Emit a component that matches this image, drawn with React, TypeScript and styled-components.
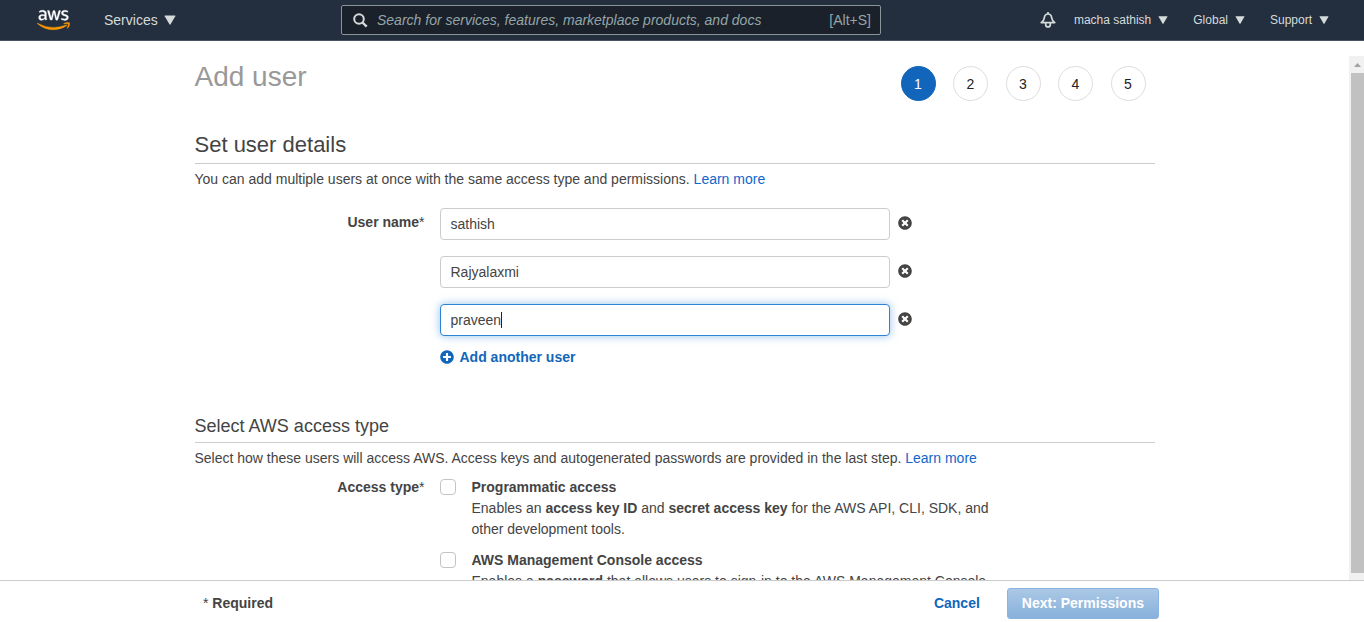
import React, { useState } from "react";
import styled, { createGlobalStyle } from "styled-components";
import { FaAws, FaPlusCircle, FaTimesCircle } from "react-icons/fa";

const GlobalStyle = createGlobalStyle`
  *, *::before, *::after { box-sizing: border-box; }
  body {
    margin: 0;
    background: #fff;
    color: #444;
    font: 14px/21px "Liberation Sans", Arial, sans-serif;
  }
  h1, h2, h3, p { margin: 0; font-weight: 400; }
  button, input { font: inherit; color: inherit; }
  button { padding: 0; border: 0; background: none; cursor: pointer; }
`;

const Page = styled.div`
  display: flex;
  flex-direction: column;
  height: 100vh;
`;

const TopBar = styled.header`
  display: grid;
  grid-template-columns: 341px minmax(0, 540px) 1fr;
  align-items: center;
  flex: none;
  height: 41px;
  border-bottom: 1px solid #4a5361;
  background: #232f3e;
  color: #d5dbdb;
`;

const NavStart = styled.div`
  display: flex;
  align-items: center;
  gap: 34px;
  padding-left: 37px;
`;

const NavEnd = styled.nav`
  display: flex;
  align-items: center;
  justify-content: flex-end;
  padding-right: 35px;
`;

const Logo = styled.a`
  display: flex;
  color: #fff;
  svg { width: 33px; height: 26px; }
  svg:last-child path { fill: url(#awsFill); }
`;

const GradientDefs = styled.svg`
  && { width: 0; height: 0; }
`;

const NavButton = styled.button<{ $small?: boolean }>`
  display: flex;
  align-items: center;
  gap: ${(p) => (p.$small ? 7 : 6)}px;
  font-size: ${(p) => (p.$small ? 12 : 14)}px;
  white-space: nowrap;
  & + & { margin-left: 25px; }
`;

const BellButton = styled.button`
  display: flex;
  margin-right: 18px;
`;

const SearchBox = styled.label`
  display: flex;
  align-items: center;
  height: 30px;
  padding: 0 9px 0 11px;
  border: 1px solid #879596;
  border-radius: 2px;
  background: #1a212b;
  color: #95a5a6;
`;

const SearchInput = styled.input`
  flex: 1;
  min-width: 0;
  padding: 0 0 0 9px;
  border: 0;
  outline: 0;
  background: none;
  &::placeholder { color: #95a5a6; font-style: italic; opacity: 1; }
`;

const Body = styled.div`
  display: flex;
  flex: 1;
  min-height: 0;
  margin-top: 15px;
`;

const ScrollArea = styled.main`
  flex: 1;
  min-width: 0;
  overflow: auto;
  scrollbar-width: none;
`;

const Content = styled.div`
  max-width: 960px;
  margin: 0 auto;
`;

const ScrollTrack = styled.div`
  display: flex;
  flex-direction: column;
  align-items: flex-end;
  flex: none;
  width: 15px;
  padding-bottom: 7px;
  background: #f1f1f1;
`;

const ScrollArrow = styled.svg`
  flex: none;
  width: 15px;
  height: 17px;
`;

const ScrollThumb = styled.div`
  flex: 1;
  width: 13px;
  background: #c1c1c1;
`;

const TitleRow = styled.div`
  display: flex;
  justify-content: space-between;
  align-items: flex-start;
  margin-bottom: 29px;
`;

const Title = styled.h1`
  font-size: 28px;
  line-height: 42px;
  color: #999;
`;

const Steps = styled.ol`
  display: flex;
  justify-content: space-between;
  width: 245px;
  margin: 0 9px 0 0;
  padding: 10px 0 0;
  list-style: none;
`;

const Step = styled.li<{ $active?: boolean }>`
  width: 35px;
  height: 35px;
  border: 1px solid ${(p) => (p.$active ? "#1166bb" : "#ddd")};
  border-radius: 50%;
  background: ${(p) => (p.$active ? "#1166bb" : "#fff")};
  color: ${(p) => (p.$active ? "#fff" : "#222")};
  line-height: 35px;
  text-align: center;
`;

const SectionTitle = styled.h2`
  padding-bottom: 4px;
  border-bottom: 1px solid #ccc;
  margin-bottom: 5px;
  font-size: 22px;
  line-height: 29px;
`;

const SubsectionTitle = styled(SectionTitle).attrs({ as: "h3" })`
  margin-top: 46px;
  font-size: 18px;
  line-height: 24px;
`;

const TextLink = styled.a`
  color: #1166cc;
  text-decoration: none;
`;

const FieldRow = styled.div<{ $top: number }>`
  display: grid;
  grid-template-columns: 230px 1fr;
  gap: 15px;
  margin-top: ${(p) => p.$top}px;
`;

const FieldLabel = styled.div<{ $inset?: boolean }>`
  padding-top: ${(p) => (p.$inset ? 4 : 0)}px;
  font-weight: 700;
  text-align: right;
  span { font-weight: 400; }
`;

const UserList = styled.div`
  display: flex;
  flex-direction: column;
  gap: 16px;
`;

const UserRow = styled.div`
  display: flex;
  align-items: center;
  gap: 8px;
`;

const UserBox = styled.label`
  display: flex;
  align-items: center;
  width: 450px;
  height: 32px;
  padding: 0 10px;
  border: 1px solid #ccc;
  border-radius: 4px;
  background: #fff;
  cursor: text;
  &:focus-within {
    border-color: #2b84d8;
    box-shadow: 0 0 8px rgba(43, 132, 216, 0.5);
  }
`;

const UserInput = styled.input`
  field-sizing: content;
  max-width: 100%;
  padding: 0;
  border: 0;
  outline: 0;
  background: none;
  caret-color: transparent;
`;

const TextCursor = styled.span`
  display: none;
  width: 1px;
  height: 16px;
  background: #222;
  input:focus + & { display: block; }
`;

const RemoveButton = styled.button`
  display: flex;
  padding-bottom: 2px;
`;

const AddButton = styled.button`
  display: flex;
  align-items: center;
  gap: 6px;
  margin-top: 11px;
  color: #1166bb;
  font-weight: 700;
  svg { margin-bottom: 2px; }
`;

const Options = styled.div`
  display: flex;
  flex-direction: column;
  gap: 10px;
`;

const Option = styled.label`
  display: flex;
  align-items: flex-start;
  gap: 16px;
  max-width: 560px;
`;

const CheckBox = styled.input`
  appearance: none;
  flex: none;
  width: 16px;
  height: 16px;
  margin: 2px 0 0;
  border: 1px solid #c4c4c4;
  border-radius: 4px;
  background: #fff;
  &:checked { border-color: #1166bb; background: #1166bb; }
`;

const Footer = styled.footer`
  flex: none;
  padding: 7px 0 3px;
  border-top: 1px solid #ccc;
  background: #fff;
`;

const FooterInner = styled.div`
  display: flex;
  align-items: center;
  max-width: 960px;
  margin: 0 auto;
  padding: 0 3px 0 1px;
`;

const Required = styled.p`
  flex: 1;
  && { font-weight: 700; }
  span { font-weight: 400; }
`;

const CancelButton = styled.button`
  margin-right: 27px;
  color: #1166bb;
  font-weight: 700;
`;

const NextButton = styled.button`
  height: 31px;
  padding: 0 14px;
  border: 1px solid #8ab3df;
  border-radius: 3px;
  background: linear-gradient(#abc8e6, #88b1dc);
  color: #fff;
  font-weight: 700;
`;

const Caret = ({ size }: { size: number }) => (
  <svg width={size} height={size} viewBox="0 0 10 10" aria-hidden="true">
    <path d="M.9 1.2h8.2q.6 0 .3.6L5.5 8.6q-.5.7-1 0L.6 1.8Q.3 1.2 .9 1.2Z" fill="#d5dbdb" />
  </svg>
);

const SearchIcon = () => (
  <svg width="15" height="15" viewBox="0 0 15 15" fill="none" stroke="#d5dbdb" strokeWidth="2" aria-hidden="true">
    <circle cx="6" cy="6" r="4.8" />
    <path d="M9.5 9.5 13.7 13.7" strokeWidth="2.4" />
  </svg>
);

const BellIcon = () => (
  <svg width="16" height="16" viewBox="0 0 16 16" fill="none" stroke="#d5dbdb" strokeWidth="1.7" strokeLinejoin="round" aria-hidden="true">
    <path d="M8 0v2M1.2 10.6C3.4 9.2 4 8 4.3 5.8 4.6 3.4 6 2 8 2s3.4 1.4 3.7 3.8c.3 2.2.9 3.4 3.1 4.8Z" />
    <path d="M5.7 11v1.4c0 1.5 1 2.5 2.3 2.5s2.3-1 2.3-2.5V11" />
  </svg>
);

export default function App() {
  const [users, setUsers] = useState(["sathish", "Rajyalaxmi", "praveen"]);

  const rename = (index: number, value: string) =>
    setUsers(users.map((u, i) => (i === index ? value : u)));

  return (
    <>
      <GlobalStyle />
      <Page>
        <TopBar>
          <NavStart>
            <Logo href="#" aria-label="AWS home">
              <GradientDefs aria-hidden="true">
                <linearGradient id="awsFill" x1="0" y1="0" x2="0" y2="1">
                  <stop offset="0.61" stopColor="#fff" />
                  <stop offset="0.61" stopColor="#f90" />
                </linearGradient>
              </GradientDefs>
              <FaAws stroke="url(#awsFill)" strokeWidth={6} />
            </Logo>
            <NavButton>Services <Caret size={12} /></NavButton>
          </NavStart>
          <SearchBox>
            <SearchIcon />
            <SearchInput
              type="search"
              aria-label="Search"
              placeholder="Search for services, features, marketplace products, and docs"
            />
            <span>[Alt+S]</span>
          </SearchBox>
          <NavEnd>
            <BellButton aria-label="Notifications"><BellIcon /></BellButton>
            <NavButton $small>macha sathish <Caret size={10} /></NavButton>
            <NavButton $small>Global <Caret size={10} /></NavButton>
            <NavButton $small>Support <Caret size={10} /></NavButton>
          </NavEnd>
        </TopBar>

        <Body>
          <ScrollArea>
            <Content>
              <TitleRow>
                <Title>Add user</Title>
                <Steps>
                  {[1, 2, 3, 4, 5].map((n) => (
                    <Step key={n} $active={n === 1}>{n}</Step>
                  ))}
                </Steps>
              </TitleRow>

              <SectionTitle>Set user details</SectionTitle>
              <p>
                You can add multiple users at once with the same access type and permissions.{" "}
                <TextLink href="#">Learn more</TextLink>
              </p>

              <FieldRow $top={18}>
                <FieldLabel $inset>
                  <label htmlFor="user-0">User name<span>*</span></label>
                </FieldLabel>
                <div>
                  <UserList>
                    {users.map((user, i) => (
                      <UserRow key={i}>
                        <UserBox>
                          <UserInput
                            id={`user-${i}`}
                            aria-label={`User name ${i + 1}`}
                            value={user}
                            autoFocus={i === 2}
                            onFocus={(e) => e.target.setSelectionRange(user.length, user.length)}
                            onChange={(e) => rename(i, e.target.value)}
                          />
                          <TextCursor />
                        </UserBox>
                        <RemoveButton
                          aria-label={`Remove ${user}`}
                          onClick={() => setUsers(users.filter((_, k) => k !== i))}
                        >
                          <FaTimesCircle size={14} />
                        </RemoveButton>
                      </UserRow>
                    ))}
                  </UserList>
                  <AddButton onClick={() => setUsers([...users, ""])}>
                    <FaPlusCircle size={14} />
                    Add another user
                  </AddButton>
                </div>
              </FieldRow>

              <SubsectionTitle>Select AWS access type</SubsectionTitle>
              <p>
                Select how these users will access AWS. Access keys and autogenerated passwords are provided in the last step.{" "}
                <TextLink href="#">Learn more</TextLink>
              </p>

              <FieldRow $top={8} role="group" aria-labelledby="access-type">
                <FieldLabel id="access-type">Access type<span>*</span></FieldLabel>
                <Options>
                  <Option>
                    <CheckBox type="checkbox" />
                    <span>
                      <b>Programmatic access</b>
                      <br />
                      Enables an <b>access key ID</b> and <b>secret access key</b> for the AWS API, CLI, SDK, and other development tools.
                    </span>
                  </Option>
                  <Option>
                    <CheckBox type="checkbox" />
                    <span>
                      <b>AWS Management Console access</b>
                      <br />
                      Enables a <b>password</b> that allows users to sign-in to the AWS Management Console.
                    </span>
                  </Option>
                </Options>
              </FieldRow>
            </Content>
          </ScrollArea>
          <ScrollTrack aria-hidden="true">
            <ScrollArrow viewBox="0 0 15 17">
              <path d="M5 11 8.5 7 12 11Z" fill="#a3a3a3" />
            </ScrollArrow>
            <ScrollThumb />
          </ScrollTrack>
        </Body>

        <Footer>
          <FooterInner>
            <Required><span>*</span> Required</Required>
            <CancelButton>Cancel</CancelButton>
            <NextButton>Next: Permissions</NextButton>
          </FooterInner>
        </Footer>
      </Page>
    </>
  );
}
